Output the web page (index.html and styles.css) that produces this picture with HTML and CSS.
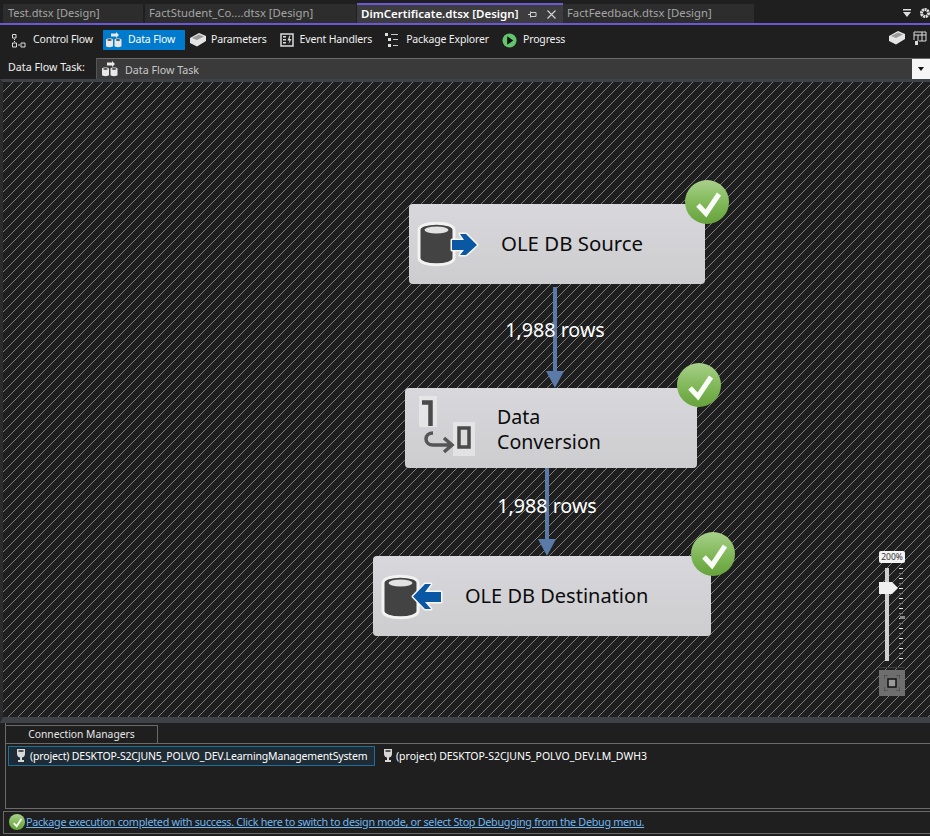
FILE: index.html
```html
<!DOCTYPE html>
<html lang="en">
<head>
<meta charset="utf-8">
<title>DimCertificate.dtsx [Design]</title>
<link rel="stylesheet" href="styles.css">
</head>
<body>
<svg class="defs" width="0" height="0" aria-hidden="true">
  <defs>
    <pattern id="hatch" width="10" height="10" patternUnits="userSpaceOnUse">
      <rect x="9" y="0" width="1" height="1"/><rect x="8" y="1" width="1" height="1"/><rect x="7" y="2" width="1" height="1"/><rect x="6" y="3" width="1" height="1"/><rect x="5" y="4" width="1" height="1"/><rect x="4" y="5" width="1" height="1"/><rect x="3" y="6" width="1" height="1"/><rect x="2" y="7" width="1" height="1"/><rect x="1" y="8" width="1" height="1"/><rect x="0" y="9" width="1" height="1"/>
    </pattern>
    <symbol id="flow" viewBox="0 0 16 16">
      <path d="M5 1.500h5V0l3 3-3 3V4.500H5z" fill="#e8e8e8"/>
      <path d="M0 7.500C0 6 7 6 7 7.500v6.500C7 15.500 0 15.500 0 14z M8.500 7.500C8.500 6 15.500 6 15.500 7.500v6.500c0 1.500-7 1.500-7 0z" fill="#e8e8e8"/>
      <ellipse cx="3.500" cy="8" rx="2.300" ry=".8" fill="#222"/><ellipse cx="12" cy="8" rx="2.300" ry=".8" fill="#222"/>
    </symbol>
    <symbol id="box" viewBox="0 0 16 14">
      <path d="M0 5 9 0l7 3v5L7 13.500 0 10z" fill="#e4e4e4"/>
      <path d="M2 5l7-3.500L14 3.500 7 7z" fill="#9a9a9a"/>
    </symbol>
    <symbol id="plug" viewBox="0 0 10 16">
      <path d="M1 1h8v5C9 8.500 7 9.500 6 9.500V12h2v2H2v-2h2V9.500C3 9.500 1 8.500 1 6z" fill="#d8d8d8"/>
      <rect x="2.500" y="2" width="5" height="2" fill="#555"/>
    </symbol>
    <linearGradient id="okFill" x1="0" y1="0" x2="0" y2="1">
      <stop offset="0" stop-color="#a8d08a"/><stop offset=".55" stop-color="#7fb757"/><stop offset="1" stop-color="#66a23c"/>
    </linearGradient>
    <symbol id="ok" viewBox="0 0 44 44">
      <circle cx="22" cy="22" r="22" fill="url(#okFill)"/>
      <path d="M13 25l8 8.500L34 14" fill="none" stroke="#fff" stroke-width="5" opacity=".95"/>
    </symbol>
  </defs>
</svg>

<header class="tabstrip">
  <div class="tab">Test.dtsx [Design]</div>
  <div class="tab tab-second">FactStudent_Co....dtsx [Design]</div>
  <div class="tab tab-active">
    <span>DimCertificate.dtsx [Design]</span>
    <svg class="tab-pin" width="9" height="9" viewBox="0 0 9 9"><path d="M0 4.500h3M2.500 1.500v6M3 2.500h5v4H3" fill="none" stroke="#cfcfcf"/></svg>
    <svg class="tab-close" width="9" height="9" viewBox="0 0 9 9"><path d="M.5.5l8 8M8.500.5l-8 8" stroke="#cfcfcf" stroke-width="1.200"/></svg>
  </div>
  <div class="tab tab-last">FactFeedback.dtsx [Design]</div>
  <div class="strip-tools">
    <svg width="10" height="10" viewBox="0 0 10 10"><path d="M1 1h8v1.500H1zM1 4h8L5 9z" fill="#e0e0e0"/></svg>
    <svg width="12" height="12" viewBox="0 0 12 12"><circle cx="6" cy="6" r="3.500" fill="none" stroke="#e0e0e0" stroke-width="3" stroke-dasharray="2 .6"/></svg>
  </div>
</header>

<nav class="toolbar">
  <a class="tool tool-control">
    <svg width="15" height="15" viewBox="0 0 15 15"><path d="M1.500 1.500h3.500v3.500H1.500zM1.500 10h4v4h-4zM10 10h4v4h-4z" fill="none" stroke="#dcdcdc"/><path d="M3.500 6v1M3.500 8v1M7 12h2" stroke="#dcdcdc"/></svg>
    <span>Control Flow</span>
  </a>
  <a class="tool tool-active"><svg width="16" height="16"><use href="#flow"/></svg><span>Data Flow</span></a>
  <a class="tool tool-params"><svg width="16" height="14"><use href="#box"/></svg><span>Parameters</span></a>
  <a class="tool">
    <svg width="14" height="14" viewBox="0 0 14 14"><path d="M1 1h12v12H1z" fill="none" stroke="#dcdcdc" stroke-width="1.500"/><path d="M3 3h3v1.500H3zM3 6h3v1.500H3zM3 9h3v1.500H3z" fill="#dcdcdc"/><path d="M9.500 2.500 7.500 7.500h2L8.500 11.500 11.500 6h-2l1-3.500z" fill="#dcdcdc"/></svg>
    <span>Event Handlers</span>
  </a>
  <a class="tool tool-explorer">
    <svg width="14" height="14" viewBox="0 0 14 14"><path d="M0 0h3v3H0zM3 5h3v3H3zM3 11h3v3H3z" fill="#e0e0e0"/><path d="M6 1.500h7M8 6.500h5M8 12.500h5" stroke="#c8c8c8"/></svg>
    <span>Package Explorer</span>
  </a>
  <a class="tool">
    <svg width="15" height="15" viewBox="0 0 16 16"><circle cx="8" cy="8" r="7.500" fill="#62c46c"/><path d="M5.500 3.500v9L12 8z" fill="#111"/></svg>
    <span>Progress</span>
  </a>
  <div class="tool-right">
    <svg width="16" height="14"><use href="#box"/></svg>
    <svg width="14" height="15" viewBox="0 0 14 15"><path d="M1 1h12v9H6M1 1v8M1 4h12M5 4v6M9 1v9" fill="none" stroke="#dcdcdc"/><path d="M2 10h3v4H2z" fill="#dcdcdc"/></svg>
  </div>
</nav>

<div class="taskbar">
  <label class="task-label">Data Flow Task:</label>
  <div class="combo">
    <svg width="16" height="16"><use href="#flow"/></svg>
    <span>Data Flow Task</span>
    <div class="combo-btn"><i></i></div>
  </div>
</div>

<main class="canvas">
  <svg class="hatch" width="100%" height="100%" aria-hidden="true"><rect class="hatch-fill" width="100%" height="100%" fill="url(#hatch)"/></svg>

  <div class="link link-1"><i class="line"></i><i class="head"></i><span>1,988 rows</span></div>
  <div class="link link-2"><i class="line"></i><i class="head"></i><span>1,988 rows</span></div>

  <div class="node node-1">
    <svg class="node-icon" width="64" height="50" viewBox="0 0 64 50">
      <path d="M2 8C2-1 37-1 37 8V36C37 45 2 45 2 36Z" fill="#434343" stroke="#f2f2f2" stroke-width="3"/>
      <ellipse cx="19.500" cy="8" rx="12" ry="3.500" fill="#e2e2e2"/>
      <path d="M35 18H47L43 12H49L60 23 49 33H43L47 28H35Z" fill="#0a57a4" stroke="#f6f6f6" stroke-width="3" paint-order="stroke" stroke-linejoin="round"/>
    </svg>
    <span class="node-text">OLE DB Source</span>
    <svg class="badge" width="44" height="44"><use href="#ok"/></svg>
  </div>
  <div class="node node-2">
    <svg class="node-icon" width="58" height="62" viewBox="0 0 58 62">
      <path d="M0 0h18v31H0zM34 26h22v34H34z" fill="#f2f2f2" opacity=".55"/>
      <path d="M3 6.500H11.500V30" fill="none" stroke="#4a4a4a" stroke-width="4.500"/>
      <rect x="40" y="32" width="10" height="19" fill="#dcdcdc" stroke="#4a4a4a" stroke-width="3.500"/>
      <path d="M14 37c-4 0-7 2-7 6s3 6 7 6h19M25 42l8 7-8 7" fill="none" stroke="#555" stroke-width="3.500"/>
    </svg>
    <span class="node-text node-text-wrap">Data<br>Conversion</span>
    <svg class="badge" width="44" height="44"><use href="#ok"/></svg>
  </div>
  <div class="node node-3">
    <svg class="node-icon" width="64" height="50" viewBox="0 0 64 50">
      <path d="M2 11C2 2 37 2 37 11V39C37 48 2 48 2 39Z" fill="#434343" stroke="#f2f2f2" stroke-width="3"/>
      <ellipse cx="19.500" cy="11" rx="12" ry="3.500" fill="#e2e2e2"/>
      <path d="M32 24.500 44 12H50L44 20H60V30H44L50 37H44Z" fill="#0a57a4" stroke="#f6f6f6" stroke-width="3" paint-order="stroke" stroke-linejoin="round"/>
    </svg>
    <span class="node-text">OLE DB Destination</span>
    <svg class="badge" width="44" height="44"><use href="#ok"/></svg>
  </div>

  <aside class="zoom">
    <div class="zoom-label">200%</div>
    <div class="zoom-slider">
      <i class="zoom-track"></i>
      <i class="zoom-ticks"></i>
      <i class="zoom-mid"></i>
      <svg class="zoom-thumb" width="19" height="12" viewBox="0 0 19 12"><path d="M0 0h13l6 6-6 6H0z" fill="#f0f0f0"/></svg>
    </div>
    <div class="zoom-fit">
      <svg width="16" height="16" viewBox="0 0 16 16"><path d="M0 4V0h4M12 0h4v4M16 12v4h-4M4 16H0v-4" fill="none" stroke="#3c3c3c"/><rect x="4" y="4" width="8" height="8" fill="#9a9a9a" stroke="#111" stroke-width="1.500"/></svg>
    </div>
  </aside>
</main>

<section class="connections">
  <div class="conn-tabrow"><div class="conn-tab">Connection Managers</div></div>
  <div class="conn-list">
    <div class="conn conn-active"><svg width="10" height="16"><use href="#plug"/></svg><span>(project) DESKTOP-S2CJUN5_POLVO_DEV.LearningManagementSystem</span></div>
    <div class="conn conn-other"><svg width="10" height="16"><use href="#plug"/></svg><span>(project) DESKTOP-S2CJUN5_POLVO_DEV.LM_DWH3</span></div>
  </div>
</section>

<footer class="status">
  <svg width="16" height="16"><use href="#ok"/></svg>
  <a class="status-link">Package execution completed with success. Click here to switch to design mode, or select Stop Debugging from the Debug menu.</a>
</footer>
</body>
</html>
```
FILE: styles.css
```css
* { box-sizing: border-box; }
html, body { margin: 0; padding: 0; }
body {
  width: 930px;
  height: 836px;
  overflow: hidden;
  display: flex;
  flex-direction: column;
  background: #1f1f1f;
  color: #f0f0f0;
  font-family: "Noto Sans", "Open Sans", sans-serif;
  font-size: 11px;
}
.defs { position: absolute; }
#hatch rect { fill: #7d7d7d; }

/* document tabs */
.tabstrip {
  height: 25px;
  flex: none;
  display: flex;
  align-items: flex-end;
  padding-left: 3px;
  border-bottom: 2px solid #6a58d6;
  background: #1f1f1f;
  position: relative;
}
.tab {
  width: 140px;
  height: 19px;
  padding-left: 5px;
  margin-right: 2px;
  background: #2d2d2d;
  color: #a4a4a4;
  font-size: 11px;
  line-height: 18px;
  white-space: nowrap;
}
.tab-second { width: 211px; margin-right: 1px; padding-left: 4px; font-size: 11.300px; }
.tab-active {
  width: 206px;
  height: 20px;
  margin-right: 0;
  padding-left: 4px;
  border-top: 2px solid #6a58d6;
  background: #3d3d3f;
  color: #fff;
  font-size: 11.500px;
  font-weight: 600;
  display: flex;
  align-items: center;
  line-height: 18px;
}
.tab-pin { margin-left: 10px; flex: none; }
.tab-close { margin-left: 10px; flex: none; }
.tab-last { width: 191px; margin-left: 0; padding-left: 4px; font-size: 11.300px; }
.strip-tools {
  margin-left: auto;
  display: flex;
  align-items: center;
  gap: 7px;
  height: 20px;
  margin-right: -1px;
}

/* designer tabs */
.toolbar {
  height: 31px;
  flex: none;
  display: flex;
  align-items: center;
  padding: 0 0 1px 11px;
  background: #1f1f1f;
}
.tool {
  height: 20px;
  display: flex;
  align-items: center;
  gap: 6px;
  margin-right: 13px;
  color: #f0f0f0;
  font-size: 10.500px;
  letter-spacing: -.15px;
  white-space: nowrap;
}
.tool span { padding-bottom: 2px; }
.tool-control { gap: 7px; margin-right: 10px; }
.tool-active {
  width: 82px;
  padding-left: 3px;
  background: #007acc;
  color: #fff;
  margin-right: 5px;
}
.tool-params { gap: 5px; }
.tool-explorer { gap: 7px; }
.tool-right {
  margin-left: auto;
  display: flex;
  align-items: center;
  gap: 8px;
  padding-right: 3px;
  margin-top: -4px;
}

/* task selector */
.taskbar {
  height: 23px;
  flex: none;
  display: flex;
  align-items: stretch;
  padding: 2px 0 0 8px;
}
.task-label { width: 88px; padding-top: 1px; font-size: 10.700px; line-height: 16px; white-space: nowrap; }
.combo {
  flex: 1;
  display: flex;
  align-items: center;
  gap: 7px;
  padding-left: 5px;
  background: #3a3a3a;
  border-top: 1px solid #6a6a6a;
  border-left: 1px solid #555;
  color: #c8c8c8;
  font-size: 10.700px;
}
.combo span { padding-top: 2px; }
.combo-btn {
  margin-left: auto;
  width: 18px;
  height: 20px;
  background: #f5f5f5;
  display: flex;
  align-items: center;
  justify-content: center;
}
.combo-btn i { border: 3.500px solid transparent; border-top: 4px solid #111; border-bottom: 0; }

/* canvas */
.canvas {
  flex: 1;
  position: relative;
  background: #1f1f1f;
  border-top: 3px solid #3f4246;
  border-bottom: 6px solid #3f4246;
  border-left: 3px solid #2a2c2e;
  overflow: hidden;
}
.hatch { position: absolute; inset: 0; display: block; }

.node {
  position: absolute;
  background: linear-gradient(#d8d8dc, #cdcdd0);
  border-radius: 4px;
  color: #0c0c0c;
  height: 80px;
}
.node-1 { left: 406px; top: 122px; width: 296px; }
.node-2 { left: 402px; top: 306px; width: 292px; }
.node-3 { left: 370px; top: 474px; width: 338px; }
.node-icon { position: absolute; }
.node-1 .node-icon { left: 8px; top: 18px; }
.node-2 .node-icon { left: 14px; top: 8px; }
.node-3 .node-icon { left: 8px; top: 16px; }
.node-text {
  position: absolute;
  font-size: 20px;
  line-height: 25px;
  white-space: nowrap;
}
.node-1 .node-text { left: 92px; top: 27px; font-size: 20.400px; }
.node-2 .node-text { left: 92px; top: 16px; font-size: 19.600px; }
.node-3 .node-text { left: 92px; top: 27px; }
.badge { position: absolute; }
.node-1 .badge { right: -24px; top: -24px; }
.node-2 .badge { right: -24px; top: -25px; }
.node-3 .badge { right: -24px; top: -24px; }

.link { position: absolute; width: 100px; text-align: center; }
.link-1 { left: 502px; top: 205px; height: 101px; }
.link-2 { left: 494px; top: 386px; height: 88px; }
.link .line {
  position: absolute;
  left: 48px;
  top: 0;
  bottom: 14px;
  width: 4px;
  background: #5a7aa8;
}
.link .head {
  position: absolute;
  left: 41px;
  bottom: 0;
  border-left: 9px solid transparent;
  border-right: 9px solid transparent;
  border-top: 17px solid #5a7aa8;
}
.link span {
  position: absolute;
  left: 0;
  right: 0;
  font-size: 19.700px;
  line-height: 26px;
  color: #fff;
  white-space: nowrap;
}
.link-1 span { top: 30px; }
.link-2 span { top: 25px; }

/* zoom control */
.zoom {
  position: absolute;
  left: 876px;
  top: 469px;
  width: 26px;
  display: flex;
  flex-direction: column;
}
.zoom-label {
  height: 12px;
  background: #f4f4f4;
  border-radius: 2px;
  color: #333;
  font-size: 8.500px;
  line-height: 12px;
  text-align: center;
}
.zoom-slider { position: relative; height: 101px; margin-top: 4px; border-bottom: 1px solid #3c3c3c; }
.zoom-track { position: absolute; left: 6px; top: 1px; bottom: 6px; width: 4px; background: #d0d0d0; }
.zoom-ticks {
  position: absolute;
  left: 20px;
  top: 1px;
  bottom: 6px;
  width: 4px;
  background:
    repeating-linear-gradient(#e8e8e8 0 1px, transparent 1px 10px),
    repeating-linear-gradient(#777 0 1px, transparent 1px 5px);
}
.zoom-mid { position: absolute; left: 21px; top: 49px; width: 5px; height: 3px; background: #888; }
.zoom-thumb { position: absolute; left: 0; top: 15px; }
.zoom-fit {
  margin-top: 2px;
  height: 26px;
  background: #6e6e6e;
  display: flex;
  align-items: center;
  justify-content: center;
}

/* connection managers */
.connections {
  height: 86px;
  flex: none;
  margin: 0 0 2px 5px;
  padding-top: 2px;
  display: flex;
  flex-direction: column;
  border-bottom: 1px solid #6a6a6a;
  border-left: 1px solid #6a6a6a;
}
.conn-tabrow { height: 19px; flex: none; border-bottom: 1px solid #6a6a6a; margin-left: -1px; }
.conn-tab {
  width: 153px;
  height: 19px;
  border: 1px solid #6a6a6a;
  border-bottom: 0;
  text-align: center;
  color: #e6e6e6;
  font-size: 10.300px;
  line-height: 17px;
}
.conn-list { display: flex; gap: 3px; padding: 2px 0 0 2px; align-items: flex-start; }
.conn {
  height: 20px;
  display: flex;
  align-items: center;
  gap: 3px;
  font-size: 10.500px;
  letter-spacing: -.16px;
  color: #fff;
  white-space: nowrap;
  border: 1px solid transparent;
  padding-left: 4px;
}
.conn-active { width: 367px; gap: 4px; padding-left: 7px; border-color: #1f6f96; background: #1f2c35; }
.conn-other { letter-spacing: -.03px; }

/* status */
.status {
  height: 23px;
  flex: none;
  margin: 0 0 2px 3px;
  padding: 0 0 2px 5px;
  display: flex;
  align-items: center;
  gap: 1px;
  border-top: 1px solid #6a6a6a;
  border-bottom: 1px solid #6a6a6a;
  border-left: 1px solid #6a6a6a;
}
.status-link {
  color: #6fb6ef;
  text-decoration: underline;
  font-size: 10.800px;
  letter-spacing: -.3px;
  white-space: nowrap;
}
```
